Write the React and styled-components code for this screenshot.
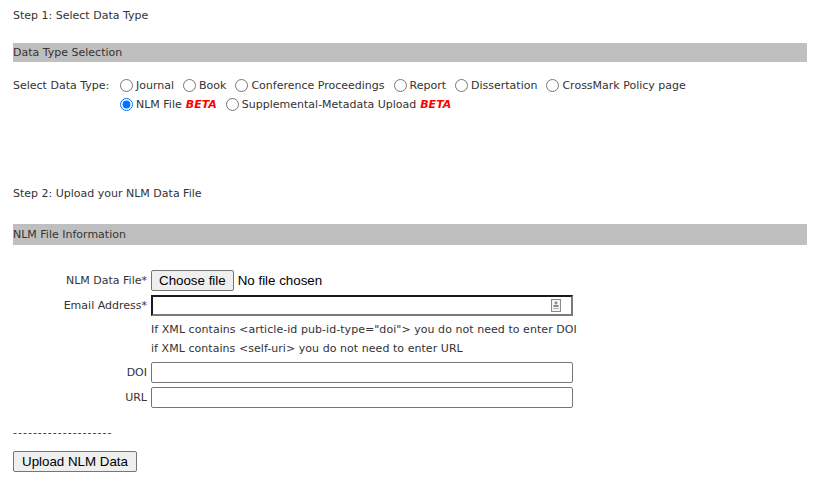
import styled, { createGlobalStyle } from "styled-components";

const GlobalStyle = createGlobalStyle`
  body {
    margin: 0;
    background: #fff;
    font-family: "DejaVu Sans", Verdana, sans-serif;
    font-size: 11px;
    color: #333;
  }
`;

const Page = styled.div`
  padding: 9px 20px 0 13px;
  display: flex;
  flex-direction: column;
`;

const Step = styled.div`
  line-height: 14px;
  margin-top: ${(p) => p.top || 0}px;
  margin-bottom: ${(p) => p.gap}px;
`;

const Bar = styled.div`
  background: #bfbfbf;
  height: ${(p) => p.h}px;
  line-height: ${(p) => p.h}px;
  margin-bottom: ${(p) => p.gap}px;
`;

const TypeRow = styled.div`
  display: flex;
  align-items: flex-start;
`;

const TypeLabel = styled.div`
  width: 105px;
  line-height: 19px;
`;

const Options = styled.div`
  display: flex;
  flex-direction: column;
`;

const OptionLine = styled.div`
  display: flex;
  align-items: center;
  height: 19px;
`;

const Option = styled.label`
  display: inline-flex;
  align-items: center;
  margin-right: 7px;
  input {
    margin: 0 3px 0 2px;
    width: 13px;
    height: 13px;
  }
`;

const Beta = styled.b`
  color: #ff0000;
  font-style: italic;
  margin-left: 4px;
`;

const Form = styled.div`
  display: grid;
  grid-template-columns: 134px 422px;
  column-gap: 4px;
  row-gap: 4px;
  align-items: center;
`;

const Label = styled.div`
  text-align: right;
  grid-column: 1;
`;

const Field = styled.div`
  grid-column: 2;
  display: flex;
  align-items: center;
`;

const Hints = styled.div`
  grid-column: 2;
  line-height: 19px;
  white-space: nowrap;
  letter-spacing: 0.05px;
`;

const NativeButton = styled.button`
  font-family: "Liberation Sans", Arial, sans-serif;
  font-size: 13.33px;
  color: #000;
  background: #efefef;
  border: 1px solid #767676;
  border-radius: 2px;
  padding: 1px 8px;
  height: 21px;
`;

const FileButton = styled(NativeButton)`
  padding: 1px 7px;
  margin-right: 4px;
`;

const Submit = styled(NativeButton)`
  align-self: flex-start;
`;

const FileText = styled.span`
  font-family: "Liberation Sans", Arial, sans-serif;
  font-size: 13.33px;
  color: #000;
`;

const InputWrap = styled.div`
  position: relative;
  width: 100%;
`;

const Input = styled.input`
  box-sizing: border-box;
  display: block;
  width: 100%;
  height: 21px;
  border: ${(p) => (p.focused ? "2px solid" : "1px solid #767676")};
  border-color: ${(p) => (p.focused ? "#1b1b1b #7a7a7a #7a7a7a #1b1b1b" : "#767676")};
  border-radius: ${(p) => (p.focused ? 0 : 2)}px;
  padding: 1px 2px;
  outline: none;
  background: #fff;
`;

const KeyIcon = styled.svg`
  position: absolute;
  right: 12px;
  top: 4px;
`;

const Dashes = styled.div`
  margin: 18px 0 11px;
  line-height: 14px;
  letter-spacing: 1px;
`;

export default function App() {
  return (
    <>
      <GlobalStyle />
      <Page>
        <Step gap={20}>Step 1: Select Data Type</Step>
        <Bar h={19} gap={14}>Data Type Selection</Bar>
        <TypeRow>
          <TypeLabel>Select Data Type:</TypeLabel>
          <Options>
            <OptionLine>
              <Option><input type="radio" name="t" />Journal</Option>
              <Option><input type="radio" name="t" />Book</Option>
              <Option><input type="radio" name="t" />Conference Proceedings</Option>
              <Option><input type="radio" name="t" />Report</Option>
              <Option><input type="radio" name="t" />Dissertation</Option>
              <Option><input type="radio" name="t" />CrossMark Policy page</Option>
            </OptionLine>
            <OptionLine>
              <Option><input type="radio" name="t" defaultChecked />NLM File <Beta>BETA</Beta></Option>
              <Option><input type="radio" name="t" />Supplemental-Metadata Upload <Beta>BETA</Beta></Option>
            </OptionLine>
          </Options>
        </TypeRow>
        <Step top={73} gap={23}>Step 2: Upload your NLM Data File</Step>
        <Bar h={21} gap={25}>NLM File Information</Bar>
        <Form>
          <Label>NLM Data File*</Label>
          <Field>
            <FileButton>Choose file</FileButton>
            <FileText>No file chosen</FileText>
          </Field>
          <Label>Email Address*</Label>
          <Field>
            <InputWrap>
              <Input focused />
              <KeyIcon width="10" height="13" viewBox="0 0 10 13">
                <rect x="0.5" y="0.5" width="9" height="12" fill="#f4f4f4" stroke="#8a8a8a" />
                <circle cx="5" cy="4" r="1.4" fill="#8a8a8a" />
                <rect x="2.5" y="6" width="5" height="2" fill="#8a8a8a" />
                <rect x="2.5" y="9" width="5" height="1" fill="#b0b0b0" />
              </KeyIcon>
            </InputWrap>
          </Field>
          <Hints>
            <div>If XML contains &lt;article-id pub-id-type="doi"&gt; you do not need to enter DOI</div>
            <div>if XML contains &lt;self-uri&gt; you do not need to enter URL</div>
          </Hints>
          <Label>DOI</Label>
          <Field><Input /></Field>
          <Label>URL</Label>
          <Field><Input /></Field>
        </Form>
        <Dashes>--------------------</Dashes>
        <Submit>Upload NLM Data</Submit>
      </Page>
    </>
  );
}
